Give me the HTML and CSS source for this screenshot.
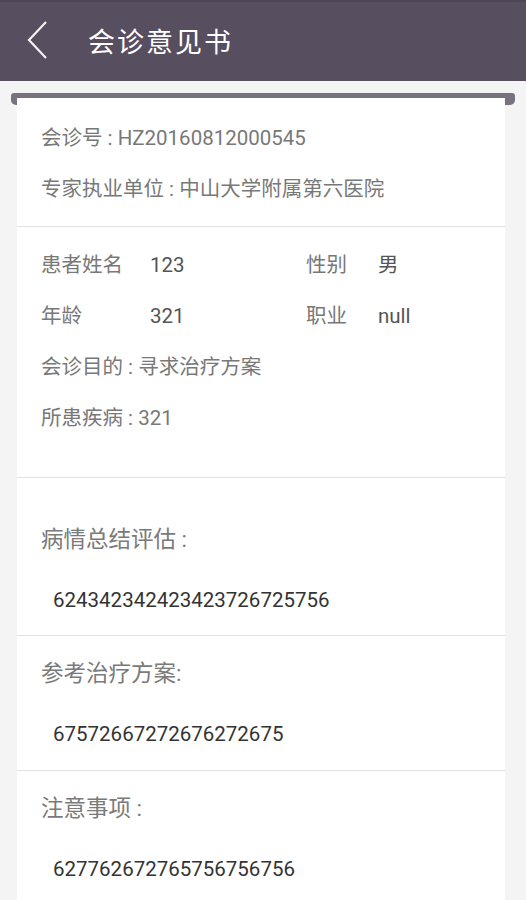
FILE: index.html
```html
<!DOCTYPE html>
<html lang="zh-CN">
<head>
<meta charset="utf-8">
<title>会诊意见书</title>
<link rel="stylesheet" href="styles.css">
</head>
<body>
<header class="topbar">
  <span class="back" aria-label="返回">
    <svg width="22" height="40" viewBox="0 0 22 40"><polyline points="19,1 2,19 19,37" fill="none" stroke="#f4f2f6" stroke-width="2.2" stroke-linejoin="miter"/></svg>
  </span>
  <h1 class="title">会诊意见书</h1>
</header>
<main class="page">
  <div class="slot"></div>
  <div class="card">
    <section class="block block-info">
      <div class="row">会诊号 : HZ20160812000545</div>
      <div class="row">专家执业单位 : 中山大学附属第六医院</div>
    </section>
    <section class="block block-patient">
      <div class="pair-row">
        <span class="k">患者姓名</span><span class="v">123</span>
        <span class="k">性别</span><span class="v">男</span>
      </div>
      <div class="pair-row">
        <span class="k">年龄</span><span class="v">321</span>
        <span class="k">职业</span><span class="v">null</span>
      </div>
      <div class="row">会诊目的 : 寻求治疗方案</div>
      <div class="row">所患疾病 : 321</div>
    </section>
    <section class="block opinion first">
      <div class="op-label">病情总结评估 :</div>
      <div class="op-value">624342342423423726725756</div>
    </section>
    <section class="block opinion">
      <div class="op-label">参考治疗方案:</div>
      <div class="op-value">67572667272676272675</div>
    </section>
    <section class="block opinion last">
      <div class="op-label">注意事项 :</div>
      <div class="op-value">627762672765756756756</div>
    </section>
  </div>
</main>
</body>
</html>
```
FILE: styles.css
```css
* { box-sizing: border-box; }
html, body { margin: 0; padding: 0; }
body {
  background: #f4f4f4;
  font-family: Roboto, "Noto Sans CJK SC", sans-serif;
  width: 526px;
  overflow: hidden;
}
.topbar {
  height: 81px;
  background: #574e5f;
  border-top: 2px solid #4d4555;
  display: flex;
  align-items: center;
}
.back {
  display: flex;
  width: 22px;
  height: 40px;
  margin-left: 27px;
  margin-top: -2px;
}
.title {
  margin: -2px 0 0 39px;
  font-size: 27px;
  font-weight: normal;
  color: #ffffff;
  letter-spacing: 2px;
}
.page {
  padding-top: 12px;
}
.slot {
  height: 12px;
  margin: 0 11px;
  background: #77727e;
  border-radius: 3px 3px 5px 5px;
}
.card {
  position: relative;
  margin: -7px 21px 0 17px;
  background: #ffffff;
  min-height: 820px;
}
.block {
  border-bottom: 1px solid #e2e2e2;
  padding-left: 24px;
}
.block-info {
  padding-top: 14.5px;
  padding-bottom: 11.5px;
}
.row {
  height: 51px;
  line-height: 51px;
  font-size: 20.5px;
  color: #787878;
}
.block-patient {
  padding-top: 13px;
  padding-bottom: 33px;
}
.pair-row {
  height: 51px;
  line-height: 51px;
  font-size: 20.5px;
  display: grid;
  grid-template-columns: 109px 156px 72px 1fr;
}
.pair-row .k { color: #787878; }
.pair-row .v { color: #555555; }
.opinion {
  padding-top: 17px;
  padding-bottom: 16px;
}
.opinion.first {
  padding-top: 41px;
  padding-bottom: 15px;
}
.opinion.last { border-bottom: none; }
.op-label {
  height: 40px;
  line-height: 40px;
  font-size: 22.5px;
  color: #7a7a7a;
}
.op-value {
  margin-top: 21px;
  height: 40px;
  line-height: 40px;
  font-size: 20.5px;
  color: #333333;
  padding-left: 12px;
}
```
